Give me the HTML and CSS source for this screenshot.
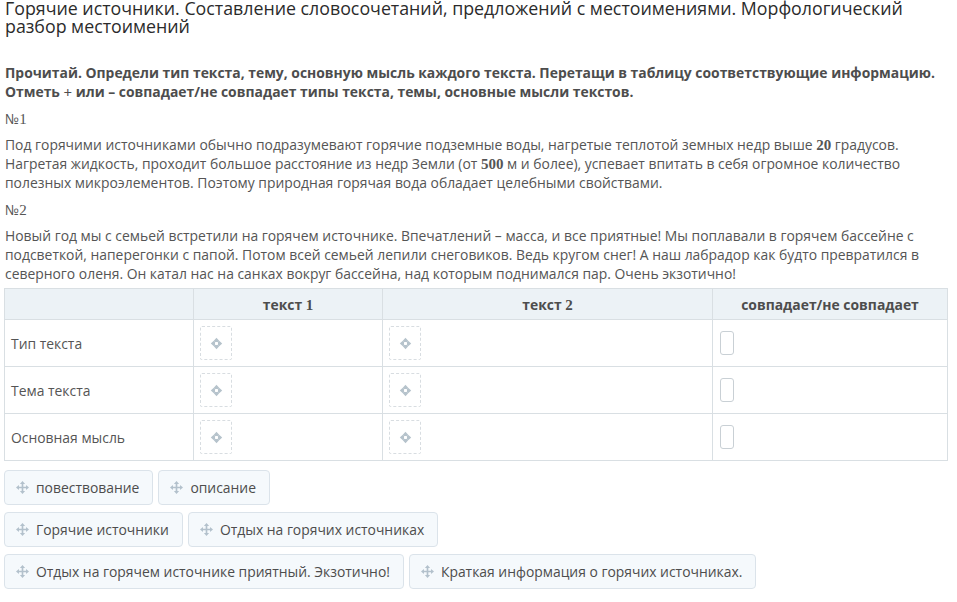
FILE: index.html
```
<!DOCTYPE html>
<html lang="ru">
<head>
<meta charset="utf-8">
<link rel="stylesheet" href="styles.css">
</head>
<body>
<h1 class="title">Горячие источники. Составление словосочетаний, предложений с местоимениями. Морфологический разбор местоимений</h1>
<p class="task">Прочитай. Определи тип текста, тему, основную мысль каждого текста. Перетащи в таблицу соответствующие информацию. Отметь <span class="num">+</span> или – совпадает/не совпадает типы текста, темы, основные мысли текстов.</p>
<p class="label">№<span class="num">1</span></p>
<p class="para">Под горячими источниками обычно подразумевают горячие подземные воды, нагретые теплотой земных недр выше <b class="num">20</b> градусов. Нагретая жидкость, проходит большое расстояние из недр Земли (от <b class="num">500</b> м и более), успевает впитать в себя огромное количество полезных микроэлементов. Поэтому природная горячая вода обладает целебными свойствами.</p>
<p class="label">№<span class="num">2</span></p>
<p class="para">Новый год мы с семьей встретили на горячем источнике. Впечатлений – масса, и все приятные! Мы поплавали в горячем бассейне с подсветкой, наперегонки с папой. Потом всей семьей лепили снеговиков. Ведь кругом снег! А наш лабрадор как будто превратился в северного оленя. Он катал нас на санках вокруг бассейна, над которым поднимался пар. Очень экзотично!</p>

<table class="grid">
<thead>
<tr><th class="c0"></th><th class="c1">текст <span class="num">1</span></th><th class="c2">текст <span class="num">2</span></th><th class="c3">совпадает/не совпадает</th></tr>
</thead>
<tbody>
<tr><td>Тип текста</td><td><div class="drop"><svg viewBox="0 0 12 12" class="dicon"><path d="M6 1.5 L7.6 3.3 H4.4 Z M6 10.5 L4.4 8.7 H7.6 Z M1.5 6 L3.3 4.4 V7.6 Z M10.5 6 L8.7 7.6 V4.4 Z"/><rect x="4" y="4" width="4" height="4" rx="1.2" fill="none" stroke-width="1.2"/></svg></div></td><td><div class="drop"><svg viewBox="0 0 12 12" class="dicon"><path d="M6 1.5 L7.6 3.3 H4.4 Z M6 10.5 L4.4 8.7 H7.6 Z M1.5 6 L3.3 4.4 V7.6 Z M10.5 6 L8.7 7.6 V4.4 Z"/><rect x="4" y="4" width="4" height="4" rx="1.2" fill="none" stroke-width="1.2"/></svg></div></td><td><div class="check"></div></td></tr>
<tr><td>Тема текста</td><td><div class="drop"><svg viewBox="0 0 12 12" class="dicon"><path d="M6 1.5 L7.6 3.3 H4.4 Z M6 10.5 L4.4 8.7 H7.6 Z M1.5 6 L3.3 4.4 V7.6 Z M10.5 6 L8.7 7.6 V4.4 Z"/><rect x="4" y="4" width="4" height="4" rx="1.2" fill="none" stroke-width="1.2"/></svg></div></td><td><div class="drop"><svg viewBox="0 0 12 12" class="dicon"><path d="M6 1.5 L7.6 3.3 H4.4 Z M6 10.5 L4.4 8.7 H7.6 Z M1.5 6 L3.3 4.4 V7.6 Z M10.5 6 L8.7 7.6 V4.4 Z"/><rect x="4" y="4" width="4" height="4" rx="1.2" fill="none" stroke-width="1.2"/></svg></div></td><td><div class="check"></div></td></tr>
<tr><td>Основная мысль</td><td><div class="drop"><svg viewBox="0 0 12 12" class="dicon"><path d="M6 1.5 L7.6 3.3 H4.4 Z M6 10.5 L4.4 8.7 H7.6 Z M1.5 6 L3.3 4.4 V7.6 Z M10.5 6 L8.7 7.6 V4.4 Z"/><rect x="4" y="4" width="4" height="4" rx="1.2" fill="none" stroke-width="1.2"/></svg></div></td><td><div class="drop"><svg viewBox="0 0 12 12" class="dicon"><path d="M6 1.5 L7.6 3.3 H4.4 Z M6 10.5 L4.4 8.7 H7.6 Z M1.5 6 L3.3 4.4 V7.6 Z M10.5 6 L8.7 7.6 V4.4 Z"/><rect x="4" y="4" width="4" height="4" rx="1.2" fill="none" stroke-width="1.2"/></svg></div></td><td><div class="check"></div></td></tr>
</tbody>
</table>

<div class="chips">
  <div class="chiprow">
    <div class="chip"><svg viewBox="0 0 14 14" class="micon"><path d="M7 0 L9.8 3.2 H7.9 V6.1 H10.8 V4.2 L14 7 L10.8 9.8 V7.9 H7.9 V10.8 H9.8 L7 14 L4.2 10.8 H6.1 V7.9 H3.2 V9.8 L0 7 L3.2 4.2 V6.1 H6.1 V3.2 H4.2 Z"/></svg>повествование</div>
    <div class="chip"><svg viewBox="0 0 14 14" class="micon"><path d="M7 0 L9.8 3.2 H7.9 V6.1 H10.8 V4.2 L14 7 L10.8 9.8 V7.9 H7.9 V10.8 H9.8 L7 14 L4.2 10.8 H6.1 V7.9 H3.2 V9.8 L0 7 L3.2 4.2 V6.1 H6.1 V3.2 H4.2 Z"/></svg>описание</div>
  </div>
  <div class="chiprow">
    <div class="chip"><svg viewBox="0 0 14 14" class="micon"><path d="M7 0 L9.8 3.2 H7.9 V6.1 H10.8 V4.2 L14 7 L10.8 9.8 V7.9 H7.9 V10.8 H9.8 L7 14 L4.2 10.8 H6.1 V7.9 H3.2 V9.8 L0 7 L3.2 4.2 V6.1 H6.1 V3.2 H4.2 Z"/></svg>Горячие источники</div>
    <div class="chip"><svg viewBox="0 0 14 14" class="micon"><path d="M7 0 L9.8 3.2 H7.9 V6.1 H10.8 V4.2 L14 7 L10.8 9.8 V7.9 H7.9 V10.8 H9.8 L7 14 L4.2 10.8 H6.1 V7.9 H3.2 V9.8 L0 7 L3.2 4.2 V6.1 H6.1 V3.2 H4.2 Z"/></svg>Отдых на горячих источниках</div>
  </div>
  <div class="chiprow">
    <div class="chip"><svg viewBox="0 0 14 14" class="micon"><path d="M7 0 L9.8 3.2 H7.9 V6.1 H10.8 V4.2 L14 7 L10.8 9.8 V7.9 H7.9 V10.8 H9.8 L7 14 L4.2 10.8 H6.1 V7.9 H3.2 V9.8 L0 7 L3.2 4.2 V6.1 H6.1 V3.2 H4.2 Z"/></svg>Отдых на горячем источнике приятный. Экзотично!</div>
    <div class="chip"><svg viewBox="0 0 14 14" class="micon"><path d="M7 0 L9.8 3.2 H7.9 V6.1 H10.8 V4.2 L14 7 L10.8 9.8 V7.9 H7.9 V10.8 H9.8 L7 14 L4.2 10.8 H6.1 V7.9 H3.2 V9.8 L0 7 L3.2 4.2 V6.1 H6.1 V3.2 H4.2 Z"/></svg>Краткая информация о горячих источниках.</div>
  </div>
</div>
</body>
</html>
```

FILE: styles.css
```
* { box-sizing: border-box; }
body {
  margin: 0;
  padding: 0 9px 0 4px;
  font-family: "Open Sans", "DejaVu Sans", sans-serif;
  font-size: 13.9px;
  color: #555;
  background: #fff;
}
.title {
  margin: -1px 0 0 1px;
  font-size: 17.8px;
  font-weight: 400;
  line-height: 18px;
  color: #2b2b2b;
}
.task {
  margin: 28px 0 0 1px;
  font-weight: 700;
  line-height: 19px;
  color: #4d4d4d;
}
.num {
  font-family: "Liberation Serif", "Times New Roman", serif;
  font-size: 15px;
  line-height: 1;
}
.label {
  margin: 8px 0 0 1px;
  line-height: 19px;
}
.para {
  margin: 7px 0 0 1px;
  line-height: 19px;
}
.grid {
  margin-top: 5px;
  width: 944px;
  border-collapse: collapse;
  table-layout: fixed;
}
.grid th, .grid td {
  border: 1px solid #d9dfe3;
  padding: 0 6px;
  text-align: left;
}
.grid th {
  background: #ecf2f6;
  height: 31px;
  font-weight: 700;
  text-align: center;
  color: #4d4d4d;
}
.grid td { height: 47px; }
.c0 { width: 189px; }
.c1 { width: 189px; }
.c2 { width: 330px; }
.drop {
  width: 32px;
  height: 34px;
  border: 1px dashed #d8dde1;
  border-radius: 2px;
  display: flex;
  align-items: center;
  justify-content: center;
}
.dicon { width: 13px; height: 13px; fill: #b6c3cc; stroke: #b6c3cc; }
.check {
  width: 14px;
  height: 24px;
  border: 1px solid #c9d0d5;
  border-radius: 3px;
  margin-left: 1px;
}
.chips {
  margin-top: 9px;
  display: flex;
  flex-direction: column;
  gap: 7px;
}
.chiprow { display: flex; gap: 5px; }
.chip {
  height: 35px;
  display: flex;
  align-items: center;
  gap: 7px;
  padding: 0 13px 0 11px;
  background: #f5f9fc;
  border: 1px solid #dbe3ea;
  border-radius: 4px;
  line-height: 19px;
  color: #4d4d4d;
}
.micon { width: 13px; height: 13px; fill: #b3c1cc; }
```
